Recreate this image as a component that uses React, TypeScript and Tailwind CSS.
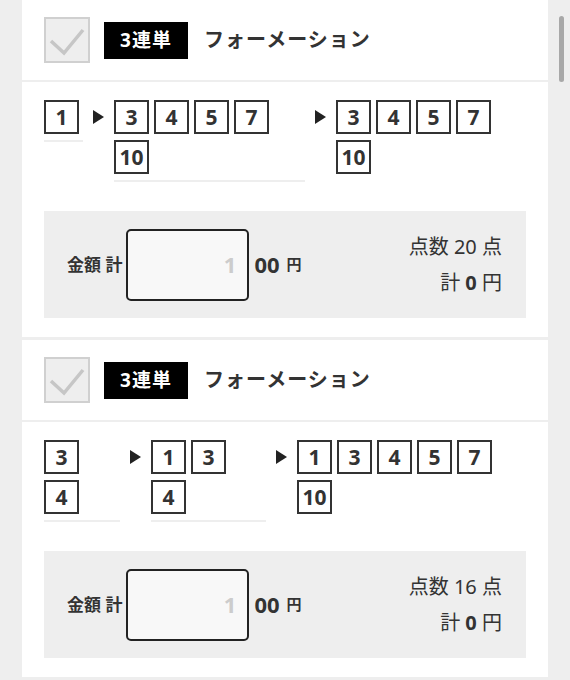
type Column = { nums: number[]; width: number; perRow: number; line: boolean }

type Ticket = { columns: Column[]; points: number }

const tickets: Ticket[] = [
  {
    columns: [
      { nums: [1], width: 39, perRow: 1, line: true },
      { nums: [3, 4, 5, 7, 10], width: 191, perRow: 4, line: true },
      { nums: [3, 4, 5, 7, 10], width: 160, perRow: 4, line: false },
    ],
    points: 20,
  },
  {
    columns: [
      { nums: [3, 4], width: 76, perRow: 1, line: true },
      { nums: [1, 3, 4], width: 115, perRow: 2, line: true },
      { nums: [1, 3, 4, 5, 7, 10], width: 200, perRow: 5, line: false },
    ],
    points: 16,
  },
]

const Arrow = () => (
  <svg width="11" height="14" viewBox="0 0 11 14" className="mx-[10px] mt-[10px] flex-none">
    <polygon points="0,0 11,7 0,14" fill="#222" />
  </svg>
)

const NumColumn = ({ col }: { col: Column }) => (
  <div
    className={`flex-none pb-[6px] border-b-2 ${col.line ? 'border-[#eeeeee]' : 'border-transparent'}`}
    style={{ width: col.width }}
  >
    <div className="flex flex-wrap gap-x-[5px] gap-y-[6px]" style={{ width: col.perRow * 40 - 5 }}>
      {col.nums.map((n, i) => (
        <div
          key={i}
          className="w-[35px] h-[34px] border-2 border-[#333] flex items-center justify-center text-[21px] font-bold text-[#333] leading-none"
        >
          {n}
        </div>
      ))}
    </div>
  </div>
)

const TicketCard = ({ ticket }: { ticket: Ticket }) => {
  const [c1, c2, c3] = ticket.columns
  return (
    <section className="bg-white">
      {/* ヘッダー */}
      <div className="h-[80px] flex items-center px-[22px]">
        <div className="w-[46px] h-[46px] bg-[#eeeeee] border-2 border-[#d0d0d0] flex items-center justify-center">
          <svg width="42" height="42" viewBox="0 0 42 42">
            <polyline points="5,22 18,34 37,11" fill="none" stroke="#c6c6c6" strokeWidth="3.5" />
          </svg>
        </div>
        <div className="ml-[14px] w-[84px] h-[37px] bg-black text-white text-[19px] font-bold tracking-[1px] flex items-center justify-center">
          3連単
        </div>
        <div className="ml-[16px] text-[20px] font-bold tracking-[1px] text-[#333]">フォーメーション</div>
      </div>
      <div className="h-[2px] bg-[#eeeeee]" />

      {/* 本体 */}
      <div className="px-[22px] pt-[18px] pb-[19px]">
        <div className="flex items-start">
          <NumColumn col={c1} />
          <Arrow />
          <NumColumn col={c2} />
          <Arrow />
          <NumColumn col={c3} />
        </div>

        <div className="mt-[29px] h-[107px] bg-[#eeeeee] flex items-center justify-between pl-[23px] pr-[24px]">
          <div className="flex items-center text-[#333]">
            <span className="text-[17px] font-bold">金額 計</span>
            <div className="ml-[4px] w-[123px] h-[72px] border-2 border-[#222] rounded-[5px] bg-[#f8f8f8] flex items-center justify-end pr-[11px]">
              <span className="text-[22px] font-bold text-[#cccccc]">1</span>
            </div>
            <span className="ml-[5px] text-[22px] font-bold">00</span>
            <span className="ml-[7px] text-[15px] font-bold">円</span>
          </div>
          <div className="text-right text-[20px] leading-[36px] text-[#333]">
            <div>点数 {ticket.points} 点</div>
            <div>
              計 <span className="font-bold">0</span> 円
            </div>
          </div>
        </div>
      </div>
    </section>
  )
}

export default function App() {
  return (
    <div className="w-[570px] h-[680px] overflow-hidden bg-[#eeeeee] flex font-['Noto_Sans','Noto_Sans_CJK_JP',sans-serif]">
      <div className="w-[22px] flex-none" />
      <main className="w-[526px] flex-none flex flex-col gap-[3px]">
        {tickets.map((t, i) => (
          <TicketCard key={i} ticket={t} />
        ))}
      </main>
      <div className="flex-1 flex justify-center pt-[16px] pl-[4px]">
        <div className="w-[5px] h-[66px] rounded-full bg-[#a8a8a8]" />
      </div>
    </div>
  )
}
